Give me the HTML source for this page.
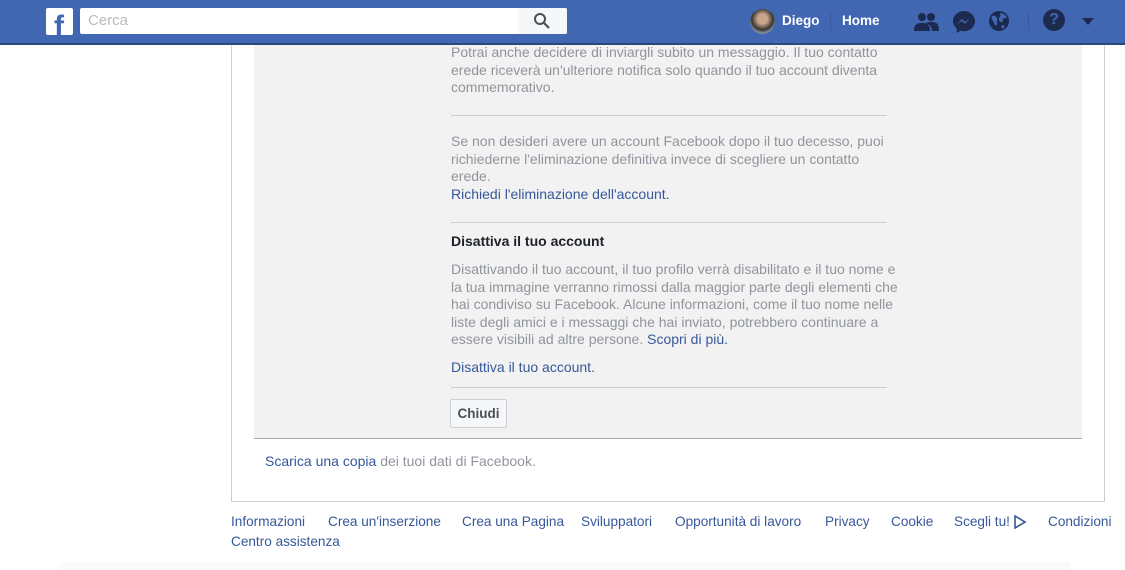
<!DOCTYPE html>
<html><head><meta charset="utf-8"><style>
body{margin:0;width:1125px;height:570px;background:#fff;font-family:"Liberation Sans",Helvetica,Arial,sans-serif;font-size:14px;position:relative;overflow:hidden}
.hdr{position:absolute;left:0;top:0;width:1125px;height:43px;background:#4267b2;border-bottom:2px solid #29487d}
.a{position:absolute}
.g{color:#90949c}
.l{color:#365899}
p{margin:0;line-height:17.5px}
.hr{position:absolute;left:451px;width:436px;height:1px;background:#ccd0d5}
.ft{position:absolute;top:514px;color:#365899;font-size:13.6px}
.w{color:#fff;font-weight:bold;font-size:13.5px;position:absolute;top:13px}
</style></head><body>
<div class="hdr"></div>
<div class="a" style="left:46px;top:8px;width:27px;height:27px;background:#fff;border-radius:2px;overflow:hidden"><span style="position:absolute;left:8px;top:2px;font:bold 30px 'Liberation Sans';color:#4267b2">f</span></div>
<div class="a" style="left:80px;top:8px;width:487px;height:26px;background:#fff;border-radius:2px"><span style="position:absolute;left:8px;top:4px;color:#bbb;font-size:15px">Cerca</span><div style="position:absolute;right:0;top:0;width:49px;height:26px;background:#f6f7f9;border-radius:0 2px 2px 0"></div>
<svg style="position:absolute;right:16px;top:4px" width="18" height="18" viewBox="0 0 18 18"><circle cx="7" cy="7" r="5" fill="none" stroke="#4b4f56" stroke-width="2"/><path d="M11 11l5 5" stroke="#4b4f56" stroke-width="2.2"/></svg></div>
<div class="a" style="left:750px;top:9px;width:25px;height:25px;border-radius:50%;background:radial-gradient(circle at 50% 40%,#c9a58c 25%,#3a3430 55%,#7b8a96 70%)"></div>
<span class="w" style="left:782px">Diego</span>
<div class="a" style="left:830px;top:11px;width:1px;height:20px;background:#355a9e"></div>
<span class="w" style="left:842px">Home</span>
<svg class="a" style="left:914px;top:11px" width="26" height="22" viewBox="0 0 26 22"><circle cx="8" cy="6" r="4" fill="#1d2a4f"/><circle cx="17" cy="6" r="4" fill="#1d2a4f"/><path d="M0 20c0-7 3-8 8-8s8 1 8 8zM12 12c2-1 3-1 5-1 5 0 8 1 8 9h-7c0-4-2-6-6-8z" fill="#1d2a4f"/></svg>
<svg class="a" style="left:952px;top:10px" width="24" height="24" viewBox="0 0 24 24"><path d="M12 1C6 1 1 5.5 1 11c0 3 1.4 5.5 3.7 7.3V23l4-2.2c1 .3 2.1.4 3.3.4 6 0 11-4.5 11-10S18 1 12 1z" fill="#1d2a4f"/><path d="M5 14l5-5 3 3 5-4-5 6-3-3z" fill="#4267b2"/></svg>
<svg class="a" style="left:988px;top:10px" width="22" height="22" viewBox="0 0 22 22"><circle cx="11" cy="11" r="10" fill="#1d2a4f"/><path d="M4 6c2-1 4 0 5 2s-1 3 0 5-1 3-2 2-1-3-2-4-2-3-1-5zM12 3c3 0 6 2 7 5-2 0-3 0-4 1s1 3-1 3-3-1-3-3 2-2 1-6zM14 15c2 0 3 1 2 3-2 1-3 0-2-3z" fill="#4267b2"/></svg>
<div class="a" style="left:1028px;top:11px;width:1px;height:20px;background:#355a9e"></div>
<div class="a" style="left:1043px;top:9px;width:22px;height:22px;border-radius:50%;background:#1d2a4f;color:#4267b2;font:bold 16px 'Liberation Sans';text-align:center;line-height:22px">?</div>
<div class="a" style="left:1082px;top:18px;width:0;height:0;border-left:6px solid transparent;border-right:6px solid transparent;border-top:7px solid #1d2a4f"></div>

<div class="a" style="left:231px;top:45px;width:872px;height:456px;border:1px solid #ccd0d5;border-top:none"></div>
<div class="a" style="left:254px;top:45px;width:828px;height:393px;background:#f2f2f2;border-bottom:1px solid #aaa"></div>

<div class="a" style="left:451px;top:44px;width:460px;white-space:nowrap">
<p class="g">Potrai anche decidere di inviargli subito un messaggio. Il tuo contatto<br>erede riceverà un'ulteriore notifica solo quando il tuo account diventa<br>commemorativo.</p></div>
<div class="hr" style="top:115px"></div>
<div class="a" style="left:451px;top:133px;width:460px;white-space:nowrap">
<p class="g">Se non desideri avere un account Facebook dopo il tuo decesso, puoi<br>richiederne l'eliminazione definitiva invece di scegliere un contatto<br>erede.</p><p class="l">Richiedi l'eliminazione dell'account.</p></div>
<div class="hr" style="top:222px"></div>
<div class="a" style="left:451px;top:232px;font-weight:bold;color:#1d2129;line-height:18px">Disattiva il tuo account</div>
<div class="a" style="left:451px;top:261px;width:460px;white-space:nowrap">
<p class="g">Disattivando il tuo account, il tuo profilo verrà disabilitato e il tuo nome e<br>la tua immagine verranno rimossi dalla maggior parte degli elementi che<br>hai condiviso su Facebook. Alcune informazioni, come il tuo nome nelle<br>liste degli amici e i messaggi che hai inviato, potrebbero continuare a<br>essere visibili ad altre persone. <span class="l">Scopri di più.</span></p></div>
<div class="a l" style="left:451px;top:358px;line-height:18px">Disattiva il tuo account.</div>
<div class="hr" style="top:387px"></div>
<div class="a" style="left:450px;top:399px;width:55px;height:27px;border:1px solid #ccd0d5;background:#f6f7f9;border-radius:2px;font-weight:bold;color:#4b4f56;text-align:center;line-height:27px;font-size:13.5px">Chiudi</div>
<div class="a" style="left:265px;top:452px;line-height:18px"><span class="l">Scarica una copia</span> <span class="g">dei tuoi dati di Facebook.</span></div>

<span class="ft" style="left:231px">Informazioni</span>
<span class="ft" style="left:328px">Crea un'inserzione</span>
<span class="ft" style="left:462px">Crea una Pagina</span>
<span class="ft" style="left:581px">Sviluppatori</span>
<span class="ft" style="left:675px">Opportunità di lavoro</span>
<span class="ft" style="left:825px">Privacy</span>
<span class="ft" style="left:891px">Cookie</span>
<span class="ft" style="left:954px">Scegli tu!</span>
<svg class="a" style="left:1013px;top:515px" width="14" height="14" viewBox="0 0 14 14"><path d="M2 1l10 6-10 6z" fill="none" stroke="#365899" stroke-width="1.6"/></svg>
<span class="ft" style="left:1048px">Condizioni</span>
<span class="ft" style="left:231px;top:534px">Centro assistenza</span>
<div class="a" style="left:60px;top:562px;width:1010px;height:8px;background:#fafafa"></div>
</body></html>
